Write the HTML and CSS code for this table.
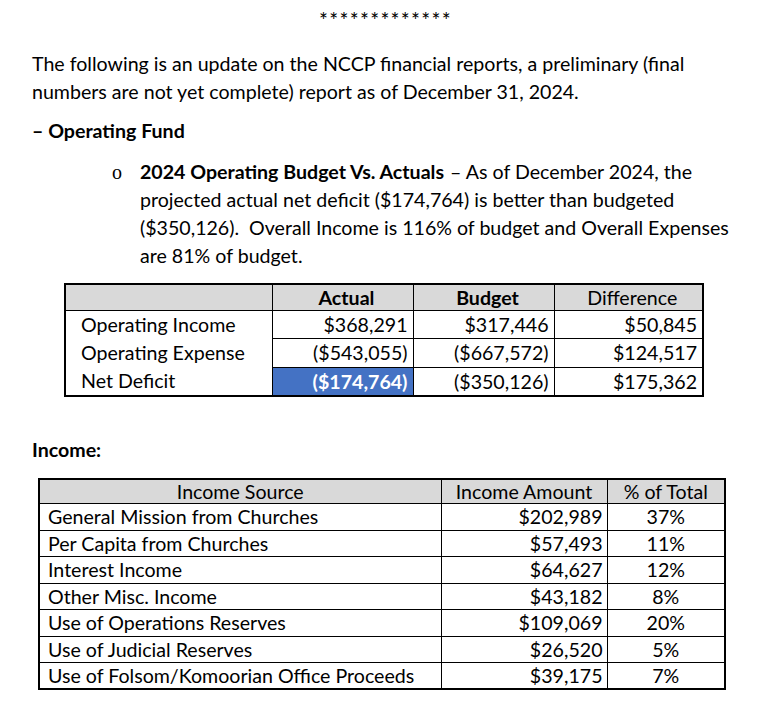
FILE: index.html
```html
<!DOCTYPE html>
<html lang="en">
<head>
<meta charset="utf-8">
<title>NCCP Financial Update</title>
<link rel="stylesheet" href="styles.css">
</head>
<body>
<main class="page">
  <div class="stars">*************</div>
  <p class="intro">The following is an update on the NCCP financial reports, a preliminary (final numbers are not yet complete) report as of December 31, 2024.</p>
  <h2 class="section">– Operating Fund</h2>
  <div class="bullet">
    <span class="marker">o</span>
    <p class="bullet-text"><strong>2024 Operating Budget Vs. Actuals</strong> – As of December 2024, the projected actual net deficit ($174,764) is better than budgeted ($350,126).&nbsp; Overall Income is 116% of budget and Overall Expenses are 81% of budget.</p>
  </div>
  <table class="summary">
    <colgroup>
      <col class="c-label"><col class="c-num"><col class="c-num"><col class="c-diff">
    </colgroup>
    <thead>
      <tr>
        <th></th>
        <th class="bold">Actual</th>
        <th class="bold">Budget</th>
        <th>Difference</th>
      </tr>
    </thead>
    <tbody>
      <tr><td class="label">Operating Income</td><td>$368,291</td><td>$317,446</td><td>$50,845</td></tr>
      <tr><td class="label">Operating Expense</td><td>($543,055)</td><td>($667,572)</td><td>$124,517</td></tr>
      <tr><td class="label">Net Deficit</td><td class="highlight">($174,764)</td><td>($350,126)</td><td>$175,362</td></tr>
    </tbody>
  </table>
  <h3 class="subhead">Income:</h3>
  <table class="income">
    <colgroup>
      <col class="i-src"><col class="i-amt"><col class="i-pct">
    </colgroup>
    <thead>
      <tr><th>Income Source</th><th>Income Amount</th><th>% of Total</th></tr>
    </thead>
    <tbody>
      <tr><td class="src">General Mission from Churches</td><td class="amt">$202,989</td><td class="pct">37%</td></tr>
      <tr><td class="src">Per Capita from Churches</td><td class="amt">$57,493</td><td class="pct">11%</td></tr>
      <tr><td class="src">Interest Income</td><td class="amt">$64,627</td><td class="pct">12%</td></tr>
      <tr><td class="src">Other Misc. Income</td><td class="amt">$43,182</td><td class="pct">8%</td></tr>
      <tr><td class="src">Use of Operations Reserves</td><td class="amt">$109,069</td><td class="pct">20%</td></tr>
      <tr><td class="src">Use of Judicial Reserves</td><td class="amt">$26,520</td><td class="pct">5%</td></tr>
      <tr><td class="src">Use of Folsom/Komoorian Office Proceeds</td><td class="amt">$39,175</td><td class="pct">7%</td></tr>
    </tbody>
  </table>
</main>
</body>
</html>
```
FILE: styles.css
```css
* { box-sizing: border-box; }

html, body {
  margin: 0;
  padding: 0;
  background: #ffffff;
}

body {
  font-family: Lato, "Open Sans", sans-serif;
  font-size: 19.6px;
  color: #000;
}

.page {
  width: 763px;
  padding: 6px 28px 0 32px;
}

.stars {
  text-align: center;
  line-height: 28px;
  font-size: 21px;
  letter-spacing: 1.3px;
  padding-left: 4px;
}

.intro {
  margin: 16px 0 0;
  line-height: 28px;
  width: 680px;
}

.section {
  margin: 11px 0 0;
  font-size: 19.6px;
  font-weight: 700;
  line-height: 28px;
}

.bullet {
  display: flex;
  margin: 13px 0 0 80px;
}

.marker {
  font-family: "Liberation Serif", serif;
  width: 28px;
  flex: none;
  line-height: 28px;
  font-size: 20px;
  font-weight: 400;
}

.bullet-text {
  margin: 0;
  line-height: 28px;
  width: 590px;
}

.bullet-text strong {
  font-weight: 700;
  margin-right: 1px;
}

table {
  border-collapse: collapse;
  table-layout: fixed;
}

.summary {
  margin: 13px 0 0 32px;
  width: 638px;
  border: 2px solid #000;
}

.c-label { width: 207px; }
.summary .c-num { width: 141px; }
.c-diff { width: 149px; }

.summary th {
  background: #d9d9d9;
  height: 26px;
  font-weight: 400;
  text-align: center;
  padding: 0 0 0 8px;
  border-left: 1px solid #000;
  border-bottom: 1px solid #000;
}

.summary th.bold { font-weight: 700; }
.summary th:first-child { border-left: none; }

.summary td {
  height: 28.5px;
  text-align: right;
  padding: 0 5px 0 0;
  border: 1px solid #000;
}

.summary td.label {
  text-align: left;
  padding: 0 0 0 15px;
  border-top: none;
  border-bottom: none;
}

.summary td.highlight {
  background: #4472c4;
  color: #fff;
  font-weight: 700;
}

.subhead {
  margin: 39px 0 0;
  font-size: 19.6px;
  font-weight: 700;
  line-height: 28px;
}

.income {
  margin: 14px 0 0 6px;
  width: 686px;
  border: 2px solid #000;
}

.i-src { width: 402px; }
.i-amt { width: 166px; }
.i-pct { width: 118px; }

.income th {
  background: #d9d9d9;
  height: 25px;
  font-weight: 400;
  text-align: center;
  padding: 0;
  border: 1px solid #000;
}

.income td {
  height: 26.5px;
  padding: 0;
  border: 1px solid #000;
}

.income td.src { padding-left: 8px; }
.income td.amt { text-align: right; padding-right: 4px; }
.income td.pct { text-align: center; }
```
